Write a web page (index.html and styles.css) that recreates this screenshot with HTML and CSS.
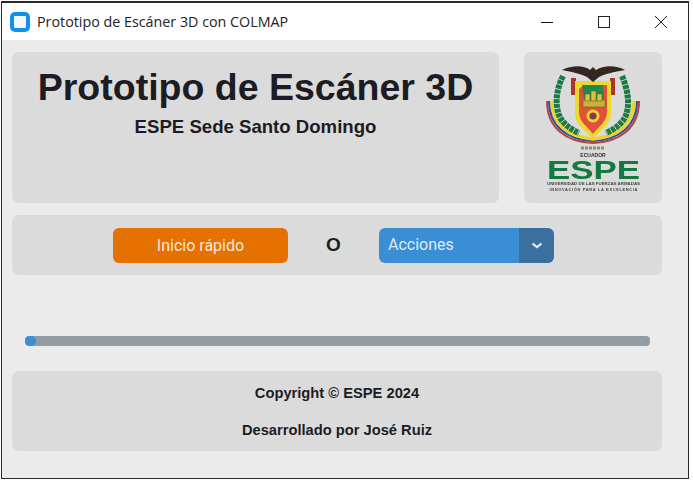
FILE: index.html
```html
<!DOCTYPE html>
<html lang="es">

<head>
    <meta charset="UTF-8" />
    <meta name="viewport" content="width=device-width, initial-scale=1.0" />
    <title>Prototipo de Escáner 3D con COLMAP</title>
    <link rel="stylesheet" href="styles.css">
</head>

<body>
    <div class="window">
        <div class="titlebar">
            <span class="app-icon"></span>
            <span class="app-title">Prototipo de Escáner 3D con COLMAP</span>
            <div class="window-controls">
                <svg class="ctl ctl-min" width="14" height="14" viewBox="0 0 14 14"><path d="M1 7.5H13" stroke="#111" fill="none" /></svg>
                <svg class="ctl ctl-max" width="14" height="14" viewBox="0 0 14 14"><rect x="1.5" y="1.5" width="11" height="11" stroke="#222" fill="none" /></svg>
                <svg class="ctl ctl-close" width="14" height="14" viewBox="0 0 14 14"><path d="M1 1L13 13M13 1L1 13" stroke="#222" fill="none" /></svg>
            </div>
        </div>

        <div class="content">
            <div class="top-row">
                <div class="card header-card">
                    <h1>Prototipo de Escáner 3D</h1>
                    <h2>ESPE Sede Santo Domingo</h2>
                </div>
                <div class="card logo-card">
                    <svg class="logo" width="138" height="151" viewBox="0 0 138 151">
                        <!-- cintas de la bandera -->
                        <path d="M23 49C23 76 42 90 69 91C96 90 115 76 115 49" stroke="#b5443f" stroke-width="2" fill="none" />
                        <path d="M25 49C25 74 43 88 69 89C95 88 113 74 113 49" stroke="#3b4fa0" stroke-width="2" fill="none" />
                        <path d="M28 49C28 72 45 85 69 87C93 85 110 72 110 49" stroke="#e9d52c" stroke-width="3.5" fill="none" />
                        <!-- laureles -->
                        <path d="M39 24C32 38 31 52 35 63C38 71 46 77 55 81" stroke="#1c7a45" stroke-width="6" stroke-dasharray="4 0.8" fill="none" />
                        <path d="M98 24C104 38 106 52 102 63C99 71 91 77 82 81" stroke="#1c7a45" stroke-width="6" stroke-dasharray="4 0.8" fill="none" />
                        <rect x="47" y="26" width="5" height="17" fill="#a8342e" />
                        <rect x="86" y="26" width="5" height="17" fill="#a8342e" />
                        <!-- escudo -->
                        <path d="M51 29H87V62C87 72 77 78 69 87C61 78 51 72 51 62Z" fill="#ecd92f" />
                        <path d="M55 37L60 33H83V60C83 70 74 75 69 82C64 75 55 70 55 60Z" fill="#e0503a" />
                        <path d="M58 33H79L80 47H60Z" fill="#1e8a4c" />
                        <path d="M59 48H81V55H59Z" fill="#c9b23a" stroke="#6c5a2a" stroke-width="0.6" />
                        <rect x="61" y="42" width="5" height="7" fill="#d9c23a" stroke="#6c5a2a" stroke-width="0.6" />
                        <rect x="67" y="39" width="5" height="10" fill="#d9c23a" stroke="#6c5a2a" stroke-width="0.6" />
                        <rect x="73" y="42" width="5" height="7" fill="#d9c23a" stroke="#6c5a2a" stroke-width="0.6" />
                        <circle cx="69" cy="64" r="6.5" fill="#ecd92f" />
                        <circle cx="69" cy="64" r="3.6" fill="#8c3450" />
                        <!-- condor -->
                        <path d="M38 18C48 13 60 13 66 18L69 15L72 18C80 13 92 13 101 18C90 20 80 22 75 25L69 30L63 25C58 22 48 20 38 18Z" fill="#33251f" />
                        <!-- ramas bajo el escudo -->
                        <path d="M57 96H81" stroke="#7f9a6a" stroke-width="3" stroke-dasharray="3 1" fill="none" />
                        <text class="logo-small" x="69" y="104.5" text-anchor="middle">ECUADOR</text>
                        <text class="logo-espe" x="69.5" y="127" text-anchor="middle" textLength="93" lengthAdjust="spacingAndGlyphs">ESPE</text>
                        <text class="logo-tiny" x="69.5" y="133" text-anchor="middle" textLength="93" lengthAdjust="spacingAndGlyphs">UNIVERSIDAD DE LAS FUERZAS ARMADAS</text>
                        <text class="logo-tiny" x="69.5" y="139" text-anchor="middle" textLength="88" lengthAdjust="spacing">INNOVACIÓN PARA LA EXCELENCIA</text>
                    </svg>
                </div>
            </div>

            <div class="card actions">
                <button class="btn btn-orange" type="button">Inicio rápido</button>
                <span class="or">O</span>
                <div class="dropdown">
                    <span class="dropdown-label">Acciones</span>
                    <span class="dropdown-arrow">
                        <svg width="12" height="7" viewBox="0 0 12 7"><path d="M1.5 1.5L6 5L10.5 1.5" stroke="#e8eef4" stroke-width="2.2" fill="none" /></svg>
                    </span>
                </div>
            </div>

            <div class="progress">
                <div class="progress-fill"></div>
            </div>

            <div class="card footer-card">
                <p>Copyright © ESPE 2024</p>
                <p>Desarrollado por José Ruiz</p>
            </div>
        </div>
    </div>
</body>

</html>
```

FILE: styles.css
```css
html,
body {
    margin: 0;
    padding: 0;
    background-color: #fff;
}

body {
    font-family: "Liberation Sans", Arial, sans-serif;
    color: #1c1c24;
    padding: 1px 0 0 1px;
}

.window {
    width: 688px;
    height: 478px;
    box-sizing: border-box;
    border: 1px solid #2a2a2a;
    border-top-width: 2px;
    background-color: #ebebeb;
    display: flex;
    flex-direction: column;
}

.titlebar {
    height: 37px;
    flex: none;
    background-color: #fff;
    display: flex;
    align-items: center;
    padding-left: 8px;
}

.app-icon {
    width: 12px;
    height: 12px;
    border: 4px solid #0f8ff0;
    border-radius: 5px;
    background-color: #f4f8fc;
    margin-right: 7px;
}

.app-title {
    font-family: "Open Sans", "Noto Sans", sans-serif;
    font-size: 14.3px;
    color: #222;
}

.window-controls {
    margin-left: auto;
    display: flex;
    gap: 43px;
    padding-right: 20px;
    align-items: center;
}

.content {
    flex: 1;
    padding: 12px 26px 0 10px;
}

.card {
    background-color: #dbdbdb;
    border-radius: 7px;
}

.top-row {
    display: flex;
    gap: 25px;
}

.header-card {
    width: 487px;
    height: 151px;
    text-align: center;
    box-sizing: border-box;
    padding-top: 15px;
}

.header-card h1 {
    margin: 0;
    font-size: 37.5px;
    line-height: 41px;
    font-weight: bold;
}

.header-card h2 {
    margin: 9px 0 0;
    font-size: 18.6px;
    line-height: 20px;
    font-weight: bold;
}

.logo-card {
    width: 138px;
    height: 151px;
}

.logo {
    display: block;
    filter: blur(0.4px);
}

.logo-espe {
    font-size: 26px;
    font-weight: bold;
    fill: #12793f;
}

.logo-small {
    font-size: 5px;
    font-weight: bold;
    fill: #333;
}

.logo-tiny {
    font-size: 4px;
    font-weight: bold;
    fill: #444;
}

.actions {
    margin-top: 12px;
    height: 60px;
    display: flex;
    align-items: center;
    padding-left: 101px;
    box-sizing: border-box;
}

.btn {
    border: none;
    font-family: Roboto, sans-serif;
    font-size: 16px;
}

.btn-orange {
    width: 175px;
    height: 35px;
    background-color: #e57200;
    color: #f6e6d8;
    border-radius: 6px;
}

.or {
    width: 91px;
    text-align: center;
    font-size: 19px;
    font-weight: bold;
}

.dropdown {
    width: 175px;
    height: 35px;
    display: flex;
    border-radius: 6px;
    overflow: hidden;
    font-family: Roboto, sans-serif;
    font-size: 16px;
    color: #dfeaf6;
}

.dropdown-label {
    flex: 1;
    background-color: #3b8ed4;
    padding-left: 9px;
    line-height: 34px;
}

.dropdown-arrow {
    width: 35px;
    background-color: #3a70a0;
    display: flex;
    align-items: center;
    justify-content: center;
}

.progress {
    margin: 61px 0 0 13px;
    width: 625px;
    height: 10px;
    background-color: #939ca4;
    border-radius: 4px;
}

.progress-fill {
    width: 11px;
    height: 10px;
    background-color: #3b8ed4;
    border-radius: 5px;
}

.footer-card {
    margin-top: 25px;
    height: 80px;
    text-align: center;
    font-size: 14.7px;
    font-weight: bold;
    padding-top: 14px;
    box-sizing: border-box;
}

.footer-card p {
    margin: 0 0 21px;
    line-height: 16px;
}
```
